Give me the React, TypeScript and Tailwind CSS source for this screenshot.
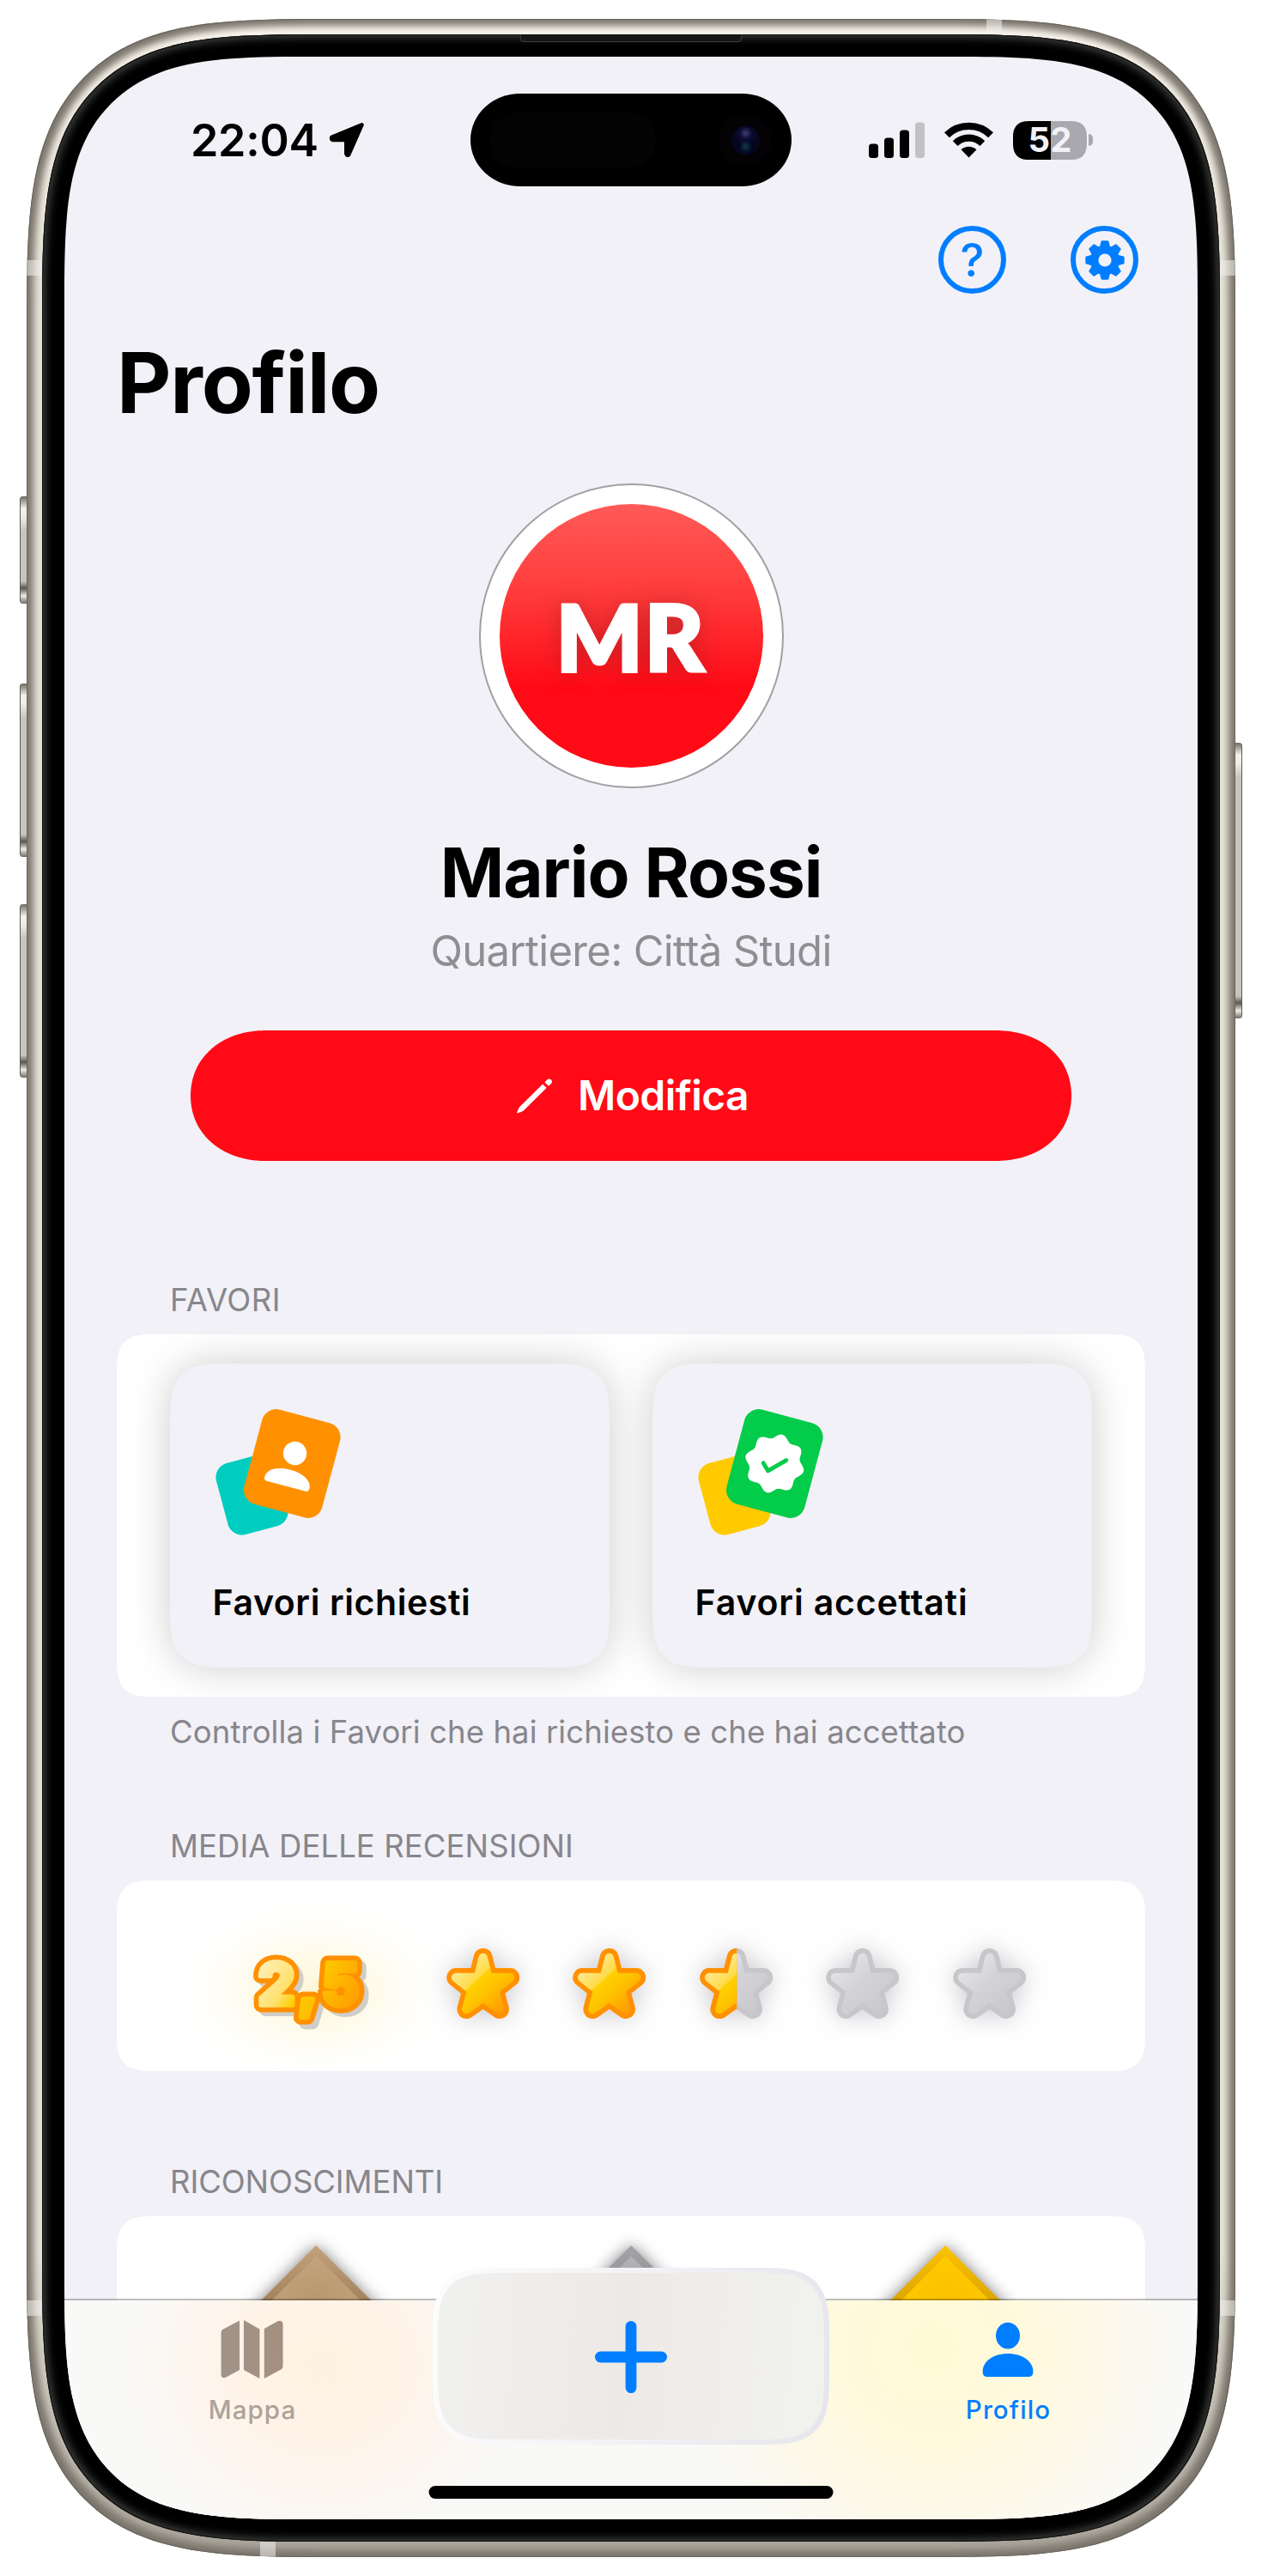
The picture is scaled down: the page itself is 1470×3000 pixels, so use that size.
import type { ReactNode } from "react";

/* ---------- generated outlines ---------- */

const sealPath = (() => {
  const pts: string[] = [];
  for (let i = 0; i < 144; i++) {
    const a = (i / 144) * Math.PI * 2;
    const r = 32.2 + 2.7 * Math.cos(8 * a);
    pts.push(`${(r * Math.sin(a)).toFixed(2)},${(-r * Math.cos(a)).toFixed(2)}`);
  }
  return `M${pts.join("L")}Z`;
})();

const gearPath = (() => {
  const pts: string[] = [];
  for (let i = 0; i < 8; i++) {
    const base = (i * Math.PI) / 4;
    const corners: [number, number][] = [
      [-0.42, 15.6],
      [-0.29, 16.4],
      [-0.15, 21.6],
      [0.15, 21.6],
      [0.29, 16.4],
      [0.42, 15.6],
    ];
    for (const [da, r] of corners) {
      pts.push(`${(r * Math.sin(base + da)).toFixed(2)},${(-r * Math.cos(base + da)).toFixed(2)}`);
    }
  }
  return `M${pts.join("L")}Z`;
})();

const starPath =
  "M0,11 L5.7,34 L31.5,34 L13.2,48.5 L19.3,71 L0,57.2 L-19.3,71 L-13.2,48.5 L-31.5,34 L-5.7,34 Z";

/* ---------- status bar ---------- */

function StatusBar() {
  return (
    <div className="mt-[43px] flex h-[108px] shrink-0 items-center">
      <div className="flex w-[473px] items-center pl-[147px]">
        <span className="mt-[2px] text-[52px] leading-[60px] font-semibold tracking-[-0.3px]">22:04</span>
        <svg className="ml-[12px] h-[42px] w-[42px]" viewBox="0 0 42 42">
          <path
            d="M38.5 3.3 L3.3 17.8 Q2.4 20.5 5 21 H20.3 V37 Q21.5 40 23.2 38 Z"
            fill="#000"
            stroke="#000"
            strokeWidth="4.6"
            strokeLinejoin="round"
          />
        </svg>
      </div>
      <div className="flex h-[108px] w-[374px] items-center justify-between bg-black pr-[24px] pl-[22px] [border-radius:58px/54px]">
        <div className="h-[65px] w-[194px] rounded-full bg-[#030303]" />
        <div className="flex size-[60px] items-center justify-center rounded-full bg-[#050206]">
          <div className="flex size-[33px] items-center justify-center rounded-full bg-[radial-gradient(circle_at_50%_25%,#3c3c74_0,#0b0b30_24%,#04041a_55%,#0a0a2c_100%)]">
            <div className="mt-[14px] size-[9px] rounded-full bg-[#0b3a4c] blur-[2px]" />
          </div>
        </div>
      </div>
      <div className="flex items-center pl-[90px]">
        <svg className="h-[42px] w-[65px]" viewBox="0 0 65 42">
          <rect x="0" y="25.5" width="11" height="16.5" rx="3.5" />
          <rect x="18" y="18.5" width="11" height="23.5" rx="3.5" />
          <rect x="36" y="9.5" width="11" height="32.5" rx="3.5" />
          <rect x="54" y="0.5" width="11" height="41.5" rx="3.5" fill="#c2c1c6" />
        </svg>
        <svg className="ml-[23px] h-[42px] w-[57px]" viewBox="-28.5 -41.5 57 42">
          <path d="M-25.6,-26.2 A36.6 36.6 0 0 1 25.6,-26.2" fill="none" stroke="#000" strokeWidth="8.4" />
          <path d="M-15.8,-16.4 A22.7 22.7 0 0 1 15.8,-16.4" fill="none" stroke="#000" strokeWidth="8.2" />
          <path d="M0,0 L-9,-9.2 A13 13 0 0 1 9,-9.2 Z" />
        </svg>
        <div className="ml-[23px] flex h-[45px] w-[86px] items-center justify-center rounded-[20px] bg-[linear-gradient(90deg,#000_44px,#a9a8ae_44px)] [corner-shape:superellipse(1.4)]">
          <span className="text-[40px] leading-[50px] font-bold text-[#f2f1f7]">52</span>
        </div>
        <div className="ml-[2px] h-[14px] w-[5px] rounded-r-[5px] bg-[#a9a8ae]" />
      </div>
    </div>
  );
}

/* ---------- header ---------- */

function RoundButton({ children }: { children: ReactNode }) {
  return (
    <button className="flex size-[79px] items-center justify-center rounded-full border-[6px] border-[#007eff] text-[#007eff]">
      {children}
    </button>
  );
}

function Header() {
  return (
    <>
      <div className="mt-[46px] flex h-[79px] shrink-0 justify-end gap-[75px] pr-[69px]">
        <RoundButton>
          <span className="text-[53px] leading-[60px] font-medium">?</span>
        </RoundButton>
        <RoundButton>
          <svg className="size-[50px]" viewBox="-25 -25 50 50">
            <path d={gearPath} fill="currentColor" stroke="currentColor" strokeWidth="2.6" strokeLinejoin="round" />
            <circle r="7.6" fill="#f2f1f7" />
          </svg>
        </RoundButton>
      </div>
      <h1 className="mt-[54px] h-[100px] shrink-0 pl-[61px] text-[98px] leading-[100px] font-bold tracking-[-1.17px]">
        Profilo
      </h1>
    </>
  );
}

function Identity() {
  return (
    <div className="flex shrink-0 flex-col items-center">
      <div className="mt-[67px] flex size-[355px] items-center justify-center rounded-full border-2 border-[#a0a0a5] bg-white">
        <div className="flex size-[307px] items-center justify-center rounded-full bg-[linear-gradient(180deg,#ff5a58_0%,#ff3a39_35%,#ff0a16_70%)] text-[106px] leading-[130px] font-black tracking-[2.5px] text-white [-webkit-text-stroke:4px_white] [font-family:Lato,sans-serif] [text-shadow:0_0_26px_rgba(60,30,30,0.34)]">
          MR
        </div>
      </div>
      <h2 className="mt-[48px] text-[80px] leading-[100px] font-bold tracking-[-1px]">Mario Rossi</h2>
      <p className="mt-[12px] text-[49px] leading-[60px] tracking-[-0.68px] text-[#8e8e93]">Quartiere: Città Studi</p>
      <button className="mt-[61.5px] flex h-[152px] w-[1026px] items-center justify-center bg-[#ff0a16] [border-radius:88px/76px] [corner-shape:superellipse(1.08)]">
        <svg className="mr-[29px] ml-[3px] h-[42px] w-[43px]" viewBox="0 0 43 42" fill="#fff">
          <path d="M31.2 7.6 L35.6 12 L8.8 38.6 Q6.5 40 1.6 41.4 Q1 41.4 1.2 40.6 Q2.6 36 4.3 34 Z" />
          <path d="M33.4 5.4 L36.2 2.6 Q38.8 0.6 41 2.6 Q43 5 40.8 7.2 L38 9.8 Z" />
        </svg>
        <span className="text-[48px] leading-[60px] font-semibold tracking-[-0.56px] text-white">Modifica</span>
      </button>
    </div>
  );
}

/* ---------- favours ---------- */

function TileIcon({ back, front, children }: { back: string; front: string; children: ReactNode }) {
  return (
    <svg className="h-[156px] w-[156px]" viewBox="246 1636 156 156">
      <rect x="-36" y="-43" width="72" height="86" rx="17" fill={back} transform="translate(293.5 1740.6) rotate(-15)" />
      <rect x="-47" y="-57" width="94" height="114" rx="17" fill={front} transform="translate(340.3 1704.5) rotate(15)" />
      <g transform="translate(340.3 1704.5) rotate(15)">{children}</g>
    </svg>
  );
}

function Tile({ label, tracking, icon }: { label: string; tracking: string; icon: ReactNode }) {
  return (
    <div className="h-[354px] w-[512px] rounded-[69px] bg-[#f2f1f7] pt-[48px] pl-[48px] shadow-[0_0_48px_rgba(0,0,0,0.2)] [corner-shape:superellipse(1.7)]">
      {icon}
      <div className={`mt-[49px] ml-[1.5px] text-[41px] leading-[50px] font-semibold ${tracking}`}>{label}</div>
    </div>
  );
}

function SectionLabel({ className, children }: { className: string; children: ReactNode }) {
  return (
    <div className={`h-[50px] shrink-0 pl-[123px] text-[36.5px] leading-[50px] text-[#87868c] ${className}`}>{children}</div>
  );
}

function Favours() {
  return (
    <>
      <SectionLabel className="mt-[137.5px] tracking-[0.5px]">FAVORI</SectionLabel>
      <div className="mx-[61px] mt-[15px] flex h-[422px] shrink-0 gap-[50px] overflow-hidden rounded-[47px] bg-white px-[62px] pt-[34px] [corner-shape:superellipse(1.7)]">
        <Tile
          label="Favori richiesti"
          tracking="tracking-[0.6px]"
          icon={
            <TileIcon back="#00cdc0" front="#ff9100">
              <circle cx="0" cy="-12.4" r="13.7" fill="#fff" />
              <path d="M-27 23 C-27 13 -14 7.4 0 7.4 C14 7.4 27 13 27 23 Q27 27.2 23.5 27.2 H-23.5 Q-27 27.2 -27 23Z" fill="#fff" />
            </TileIcon>
          }
        />
        <Tile
          label="Favori accettati"
          tracking="tracking-[0.85px]"
          icon={
            <TileIcon back="#ffca00" front="#03cc4a">
              <path d={sealPath} fill="#fff" />
              <path
                d="M-13.2 -0.7 L-7.7 8.4 L13.6 -3.8"
                transform="rotate(-15)"
                fill="none"
                stroke="#03cc4a"
                strokeWidth="4.8"
                strokeLinecap="round"
                strokeLinejoin="round"
              />
            </TileIcon>
          }
        />
      </div>
      <p className="mt-[15.5px] h-[50px] shrink-0 pl-[123px] text-[36.5px] leading-[50px] tracking-[0.09px] text-[#87868c]">
        Controlla i Favori che hai richiesto e che hai accettato
      </p>
    </>
  );
}

/* ---------- ratings ---------- */

function ScoreGlyphs() {
  return (
    <>
      <tspan x="300.4" y="2334.6">2</tspan>
      <tspan x="374.4" y="2334.6">5</tspan>
      <tspan x="346.5" y="2336">,</tspan>
    </>
  );
}

function Score() {
  return (
    <svg className="h-[222px] w-[353px] overflow-visible" viewBox="136 2190 353 222">
      <defs>
        <linearGradient id="scoreFill" gradientUnits="userSpaceOnUse" x1="300" y1="2282" x2="405" y2="2350">
          <stop offset="0" stopColor="#fff3c4" />
          <stop offset="0.35" stopColor="#ffe170" />
          <stop offset="0.5" stopColor="#ffcd00" />
          <stop offset="1" stopColor="#ff9d00" />
        </linearGradient>
        <radialGradient id="scoreGlow">
          <stop offset="0" stopColor="#fdf6d8" />
          <stop offset="0.4" stopColor="#fefbea" />
          <stop offset="1" stopColor="#fffefa" stopOpacity="0" />
        </radialGradient>
      </defs>
      <ellipse cx="366" cy="2318" rx="170" ry="110" fill="url(#scoreGlow)" />
      <g className="text-[68px] font-extrabold" strokeLinejoin="round" strokeLinecap="round">
        <text fill="#cfcecb" stroke="#cfcecb" strokeWidth="16" transform="translate(5.5 5.5)">
          <ScoreGlyphs />
        </text>
        <text fill="#ff9100" stroke="#ff9100" strokeWidth="17">
          <ScoreGlyphs />
        </text>
        <text fill="url(#scoreFill)" stroke="url(#scoreFill)" strokeWidth="5.6">
          <ScoreGlyphs />
        </text>
      </g>
    </svg>
  );
}

function StarShape({ outline, fill }: { outline: string; fill: string }) {
  return (
    <>
      <path d={starPath} fill={outline} stroke={outline} strokeWidth="22" strokeLinejoin="round" />
      <path d={starPath} fill={fill} stroke={fill} strokeWidth="10.6" strokeLinejoin="round" />
    </>
  );
}

function Star({ level }: { level: "full" | "half" | "empty" }) {
  return (
    <svg
      className="h-[222px] w-[147.4px] overflow-visible [filter:drop-shadow(0_0_15px_rgba(50,50,75,0.27))]"
      viewBox="-73.7 -79 147.4 222"
    >
      {level !== "full" && <StarShape outline="#c7c6cb" fill="url(#starGrey)" />}
      {level !== "empty" && (
        <g clipPath={level === "half" ? "url(#leftHalf)" : undefined}>
          <StarShape outline="#ff9100" fill="url(#starGold)" />
        </g>
      )}
    </svg>
  );
}

function Ratings() {
  return (
    <>
      <SectionLabel className="mt-[83.5px] tracking-[0.08px]">MEDIA DELLE RECENSIONI</SectionLabel>
      <div className="mx-[61px] mt-[15px] flex h-[222px] shrink-0 overflow-hidden rounded-[47px] bg-white [corner-shape:superellipse(1.7)]">
        <Score />
        <Star level="full" />
        <Star level="full" />
        <Star level="half" />
        <Star level="empty" />
        <Star level="empty" />
        <svg className="size-0">
          <defs>
            <linearGradient id="starGold" gradientUnits="userSpaceOnUse" x1="-27" y1="16" x2="24" y2="72">
              <stop offset="0" stopColor="#ffec9f" />
              <stop offset="0.36" stopColor="#ffdb4a" />
              <stop offset="0.4" stopColor="#ffcf00" />
              <stop offset="0.6" stopColor="#ffc400" />
              <stop offset="1" stopColor="#ff9a00" />
            </linearGradient>
            <linearGradient id="starGrey" gradientUnits="userSpaceOnUse" x1="-27" y1="16" x2="24" y2="72">
              <stop offset="0" stopColor="#e4e6ea" />
              <stop offset="0.42" stopColor="#d3d3d8" />
              <stop offset="1" stopColor="#c9c8cd" />
            </linearGradient>
            <clipPath id="leftHalf">
              <rect x="-60" y="-20" width="60.5" height="130" />
            </clipPath>
          </defs>
        </svg>
      </div>
    </>
  );
}

/* ---------- awards ---------- */

function Diamond({ rim, rimDark, face, faceDark }: { rim: string; rimDark: string; face: string; faceDark: string }) {
  const id = `d${rim.slice(1)}`;
  return (
    <svg
      className="h-[260px] w-[366.5px] overflow-visible [filter:drop-shadow(0_0_9px_rgba(0,0,0,0.5))]"
      viewBox="-183.25 0 366.5 260"
    >
      <defs>
        <linearGradient id={`${id}r`} x1="0" y1="0" x2="0" y2="0.5">
          <stop offset="0" stopColor={rim} />
          <stop offset="0.5" stopColor={rimDark} />
        </linearGradient>
        <radialGradient id={`${id}f`} gradientUnits="userSpaceOnUse" cx="0" cy="82" r="62">
          <stop offset="0" stopColor={faceDark} />
          <stop offset="1" stopColor={face} />
        </radialGradient>
      </defs>
      <path d="M0 0 L130 130 L0 260 L-130 130Z" fill={`url(#${id}r)`} />
      <path d="M0 12.5 L117.5 130 L0 247.5 L-117.5 130Z" fill={`url(#${id}f)`} />
    </svg>
  );
}

function Awards() {
  return (
    <>
      <SectionLabel className="mt-[104px] tracking-[-0.06px]">RICONOSCIMENTI</SectionLabel>
      <div className="mx-[61px] mt-[15px] flex h-[420px] shrink-0 justify-center rounded-t-[47px] bg-white pt-[34px] [corner-shape:superellipse(1.7)]">
        <Diamond rim="#c3a17c" rimDark="#a3835c" face="#c3a27b" faceDark="#b39369" />
        <Diamond rim="#a4a4a9" rimDark="#88888d" face="#b0b0b5" faceDark="#98989d" />
        <Diamond rim="#fcc300" rimDark="#dda500" face="#ffc900" faceDark="#f6bd00" />
      </div>
    </>
  );
}

/* ---------- tab bar ---------- */

function TabBar() {
  return (
    <nav className="absolute inset-x-0 bottom-0 grid h-[257px] grid-cols-3 border-t-2 border-black/25 bg-[#f9f9f8] bg-[radial-gradient(ellipse_240px_220px_at_300px_75px,#fff2e1_0%,#fff3e8_40%,transparent_100%),radial-gradient(ellipse_300px_290px_at_1010px_55px,#fffad4_0%,#fff9de_40%,transparent_100%)] [background-clip:padding-box]">
      <div className="flex flex-col items-center pr-[2px]">
        <svg className="mt-[23px] h-[68px] w-[73px] -translate-x-px" viewBox="0 0 72.5 68">
          <defs>
            <linearGradient id="mapTint" gradientUnits="userSpaceOnUse" x1="0" y1="0" x2="72" y2="0">
              <stop offset="0" stopColor="#a09389" />
              <stop offset="1" stopColor="#a5907e" />
            </linearGradient>
          </defs>
          <g fill="url(#mapTint)">
            <path d="M21.8 0.5 V58 L5.6 66.8 Q0.3 68.5 0.3 62.5 V14.5 Q0.3 12 2.4 10.8 Z" />
            <path d="M26.7 0 L45.2 10.5 V68 L26.7 58 Z" />
            <path d="M50.5 10 L66.6 1.1 Q72.3 -0.3 72.3 5.4 V53.4 Q72.3 56.2 70.2 57.4 L50.5 68 Z" />
          </g>
        </svg>
        <span className="mt-[16px] text-[29.5px] leading-[40px] font-medium tracking-[1.1px] text-[#aca298]">Mappa</span>
      </div>
      <div className="flex justify-center">
        <button className="-mt-[38px] flex h-[206px] w-[462px] shrink-0 rounded-[84px] bg-[linear-gradient(100deg,#fdfdfe_0%,#f3f3f7_45%,#e6e5ed_100%)] p-[6px] [corner-shape:superellipse(1.7)]">
          <span className="flex flex-1 items-center justify-center rounded-[77px] bg-[linear-gradient(95deg,#f1f1f0_0%,#ede9e6_48%,#f1f1ee_90%)] pt-[2px] [corner-shape:superellipse(1.7)]">
            <svg className="size-[86px]" viewBox="0 0 86 86" stroke="#007eff" strokeWidth="12.8" strokeLinecap="round">
              <path d="M43 7.4 V78.6 M7.4 43 H78.6" />
            </svg>
          </span>
        </button>
      </div>
      <div className="flex flex-col items-center pr-[2px] text-[#007eff]">
        <svg className="mt-[25px] h-[66px] w-[60px]" viewBox="0 0 60 66" fill="currentColor">
          <ellipse cx="30" cy="16.2" rx="14" ry="15.4" />
          <path d="M0.6 58 C0.6 46 13 37 30 37 C47 37 59.4 46 59.4 58 Q59.4 64 54 64 H6 Q0.6 64 0.6 58Z" />
        </svg>
        <span className="mt-[16px] pl-[1px] text-[29.5px] leading-[40px] font-medium tracking-[1.1px]">Profilo</span>
      </div>
      <div className="absolute bottom-[24px] left-1/2 h-[15px] w-[471px] -translate-x-1/2 rounded-full bg-black" />
    </nav>
  );
}

/* ---------- device ---------- */

function SideKey({ className }: { className: string }) {
  return (
    <div
      className={`absolute bg-[linear-gradient(180deg,#6f6a62_0,#f4f0ea_14px,#f0ece6_24px,#c9c4bd_40px,#c9c4bd_calc(100%-26px),#5c5550_calc(100%-18px),#efebe5_calc(100%-9px),#6f6a62_100%)] ${className}`}
    />
  );
}

function Band({ className }: { className: string }) {
  return <div className={`absolute bg-[#f0eeec]/55 ${className}`} />;
}

export default function App() {
  return (
    <div className="h-[3000px] w-[1470px] overflow-hidden bg-white pt-[22px] text-black [font-family:Inter,sans-serif]">
      <div className="relative mx-auto h-[2956px] w-[1408px]">
        <SideKey className="top-[556px] -left-[8px] h-[125px] w-[10px] rounded-l-[4px] border-l-[1.5px] border-[#5d5850]" />
        <SideKey className="top-[774px] -left-[8px] h-[202px] w-[10px] rounded-l-[4px] border-l-[1.5px] border-[#5d5850]" />
        <SideKey className="top-[1031px] -left-[8px] h-[202px] w-[10px] rounded-l-[4px] border-l-[1.5px] border-[#5d5850]" />
        <SideKey className="top-[843px] -right-[8px] h-[321px] w-[10px] rounded-r-[4px] border-r-[1.5px] border-[#5d5850]" />

        <div className="relative h-full overflow-hidden rounded-[351px] bg-[linear-gradient(180deg,#fbf7ee_0,#e8e3d8_320px,#e8e3d8_2600px,#a8a398_2956px)] p-[18px] shadow-[inset_0_0_0_1px_#6b665e,inset_0_0_9px_8px_#7b756c] [corner-shape:superellipse(1.7)]">
          <Band className="top-0 left-[1118px] h-[18px] w-[18px]" />
          <Band className="bottom-0 left-[272px] h-[18px] w-[18px]" />
          <Band className="top-[281px] left-0 h-[18px] w-[18px]" />
          <Band className="top-[281px] right-0 h-[18px] w-[18px]" />
          <Band className="top-[2657px] left-0 h-[18px] w-[18px]" />
          <Band className="top-[2657px] right-0 h-[18px] w-[18px]" />

          <div className="relative h-full rounded-[324px] bg-black p-[26px] shadow-[inset_0_0_0_1px_#14130f,inset_0_0_10px_4px_#3b3d3c] [corner-shape:superellipse(1.7)]">
            <div className="absolute top-[1px] left-1/2 h-[8px] w-[258px] -translate-x-1/2 rounded-b-[4px] border border-t-0 border-[#3c3c3c] bg-[#161616]" />

            <main className="relative flex h-full flex-col overflow-hidden rounded-[284px] bg-[#f2f1f7] [corner-shape:superellipse(1.7)]">
              <StatusBar />
              <Header />
              <Identity />
              <Favours />
              <Ratings />
              <Awards />
              <TabBar />
            </main>
          </div>
        </div>
      </div>
    </div>
  );
}
